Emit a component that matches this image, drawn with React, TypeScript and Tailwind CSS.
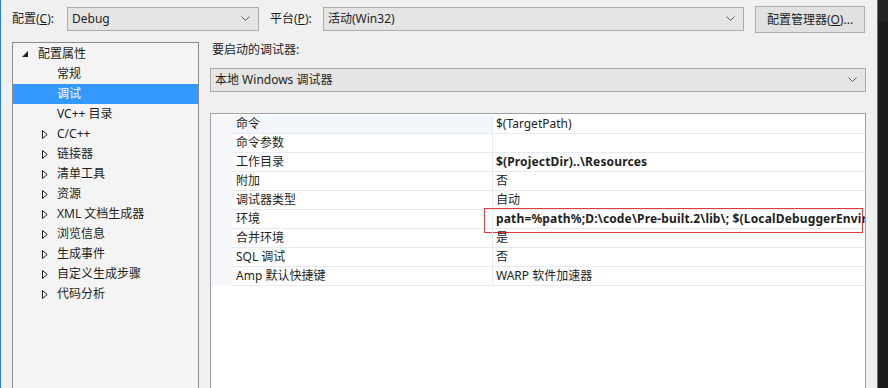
import React from "react";

const font = { fontFamily: '"Noto Sans", "Noto Sans CJK SC", sans-serif' };

function Chevron() {
  return (
    <svg width="9" height="6" viewBox="0 0 9 6" className="shrink-0">
      <polyline points="0.5,0.5 4.5,4.5 8.5,0.5" fill="none" stroke="#5a5a5a" strokeWidth="1" />
    </svg>
  );
}

function Combo({ text, className }: { text: string; className: string }) {
  return (
    <div
      className={`flex h-[24px] items-center justify-between border border-[#acacac] bg-[#e5e5e5] pl-[4px] pr-[8px] ${className}`}
    >
      <span className="truncate">{text}</span>
      <Chevron />
    </div>
  );
}

function Collapsed() {
  return (
    <svg width="6" height="9" viewBox="0 0 6 9" className="shrink-0">
      <polygon points="0.5,0.5 5.2,4.5 0.5,8.5" fill="none" stroke="#1e1e1e" strokeWidth="1" />
    </svg>
  );
}

function Expanded() {
  return (
    <svg width="6" height="6" viewBox="0 0 6 6" className="shrink-0">
      <polygon points="6,0 6,6 0,6" fill="#1e1e1e" />
    </svg>
  );
}

const tree: { label: string; kind: "root" | "leaf" | "node"; selected?: boolean }[] = [
  { label: "配置属性", kind: "root" },
  { label: "常规", kind: "leaf" },
  { label: "调试", kind: "leaf", selected: true },
  { label: "VC++ 目录", kind: "leaf" },
  { label: "C/C++", kind: "node" },
  { label: "链接器", kind: "node" },
  { label: "清单工具", kind: "node" },
  { label: "资源", kind: "node" },
  { label: "XML 文档生成器", kind: "node" },
  { label: "浏览信息", kind: "node" },
  { label: "生成事件", kind: "node" },
  { label: "自定义生成步骤", kind: "node" },
  { label: "代码分析", kind: "node" },
];

const props: { name: string; value: string; bold?: boolean; boxed?: boolean }[] = [
  { name: "命令", value: "$(TargetPath)" },
  { name: "命令参数", value: "" },
  { name: "工作目录", value: "$(ProjectDir)..\\Resources", bold: true },
  { name: "附加", value: "否" },
  { name: "调试器类型", value: "自动" },
  {
    name: "环境",
    value: "path=%path%;D:\\code\\Pre-built.2\\lib\\; $(LocalDebuggerEnvironment)",
    bold: true,
    boxed: true,
  },
  { name: "合并环境", value: "是" },
  { name: "SQL 调试", value: "否" },
  { name: "Amp 默认快捷键", value: "WARP 软件加速器" },
];

export default function App() {
  return (
    <div className="flex h-[388px] w-[888px] overflow-hidden text-[12px] text-[#1e1e1e]" style={font}>
      <div className="w-[1px] bg-[#2a7fd4]" />
      <div className="flex w-[876px] flex-col bg-[#f0f0f0] pl-[11px]">
        {/* top bar */}
        <div className="flex h-[42px] items-start pt-[6px]">
          <div className="mt-[1px] flex h-[24px] w-[55px] items-center">
            配置(<span className="underline">C</span>):
          </div>
          <Combo text="Debug" className="mt-[1px] w-[192px]" />
          <div className="ml-[11px] mt-[1px] flex h-[24px] w-[53px] items-center">
            平台(<span className="underline">P</span>):
          </div>
          <Combo text="活动(Win32)" className="mt-[1px] w-[421px]" />
          <button
            type="button"
            className="ml-[11px] flex h-[27px] w-[110px] items-center justify-center border border-[#adadad] bg-[#e1e1e1]"
          >
            配置管理器(<span className="underline">O</span>)...
          </button>
        </div>

        {/* body */}
        <div className="flex flex-1">
          <div className="w-[187px] border-x border-t border-[#8c8c8c] bg-[#f4f4f4] pt-[1px]">
            {tree.map((t) => (
              <div
                key={t.label}
                className={`flex h-[20px] items-center ${t.selected ? "bg-[#3399ff] text-white" : ""}`}
              >
                {t.kind === "root" ? (
                  <>
                    <span className="ml-[9px] flex w-[16px] items-center">
                      <Expanded />
                    </span>
                    <span>{t.label}</span>
                  </>
                ) : (
                  <>
                    <span className="ml-[29px] flex w-[15px] items-center">
                      {t.kind === "node" && <Collapsed />}
                    </span>
                    <span>{t.label}</span>
                  </>
                )}
              </div>
            ))}
          </div>

          <div className="ml-[11px] flex w-[656px] flex-col">
            <div className="flex h-[16px] items-center pl-[2px]">要启动的调试器:</div>
            <Combo text="本地 Windows 调试器" className="mt-[10px] w-[656px]" />
            <div className="mt-[21px] flex-1 border-x border-t border-[#a0a0a0] bg-white pt-[1px]">
              {props.map((p, i) => (
                <div key={p.name} className="relative flex h-[19px]">
                  <div className="w-[21px] bg-[#f5f7fa]" />
                  <div
                    className={`flex w-[260px] items-center border-b border-[#e6ebf3] pl-[4px] ${
                      i === 0 ? "bg-[#f2f5fa]" : ""
                    }`}
                  >
                    {p.name}
                  </div>
                  <div
                    className={`flex min-w-0 flex-1 items-center overflow-hidden whitespace-nowrap border-b border-l border-[#e6ebf3] pl-[3px] ${
                      p.bold ? "font-bold tracking-[0.15px]" : ""
                    }`}
                  >
                    {p.value}
                  </div>
                  {p.boxed && (
                    <div className="pointer-events-none absolute left-[273px] top-[-2px] h-[25px] w-[379px] border border-[#e23a3a]" />
                  )}
                </div>
              ))}
            </div>
          </div>
        </div>
      </div>
      <div className="w-[1px] bg-[#2a7fd4]" />
      <div className="flex w-[10px] flex-col bg-[#1b1b1b]">
        <div className="h-[22px] bg-[#232323]" />
      </div>
    </div>
  );
}
